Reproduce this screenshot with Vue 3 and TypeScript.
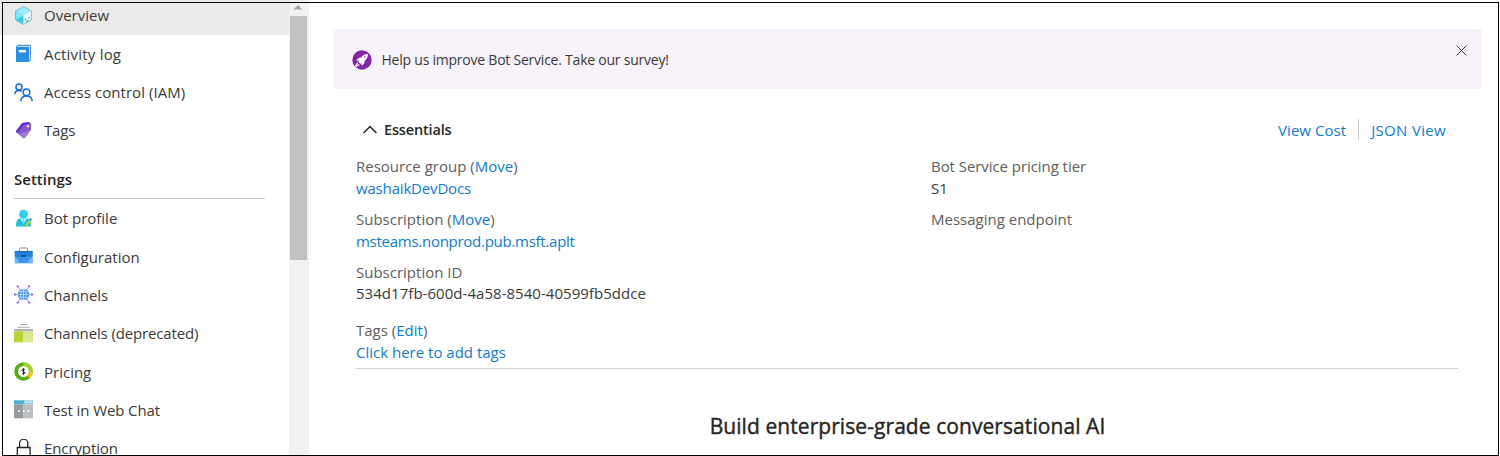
<script setup lang="ts">
interface NavItem { icon: string; label: string; active?: boolean }

const general: NavItem[] = [
  { icon: 'cube', label: 'Overview', active: true },
  { icon: 'log', label: 'Activity log' },
  { icon: 'people', label: 'Access control (IAM)' },
  { icon: 'tag', label: 'Tags' },
]
const settings: NavItem[] = [
  { icon: 'bot', label: 'Bot profile' },
  { icon: 'case', label: 'Configuration' },
  { icon: 'globe', label: 'Channels' },
  { icon: 'stack', label: 'Channels (deprecated)' },
  { icon: 'price', label: 'Pricing' },
  { icon: 'chat', label: 'Test in Web Chat' },
  { icon: 'lock', label: 'Encryption' },
]
</script>

<template>
  <div class="page">
    <nav class="sidebar">
      <template v-for="(group, gi) in [general, settings]" :key="gi">
        <h2 v-if="gi === 1" class="heading"><span class="t">Settings</span></h2>
        <div v-for="item in group" :key="item.label" class="item" :class="{ active: item.active }">
          <svg class="icon" viewBox="0 0 19 19" width="19" height="19">
            <g v-if="item.icon === 'cube'">
              <path d="M9.5 .5 17.5 5 9.5 9.6 1.6 5Z" fill="#9cebf9" />
              <path d="M1.6 5 9.5 9.6V18.5L1.6 14Z" fill="#32d0e8" />
              <path d="M1.6 5 9.5 9.6 1.6 14Z" fill="#7fe8f8" />
              <path d="M17.5 5 9.5 9.6V18.5L17.5 14Z" fill="#eaf9fd" />
              <path d="M9.5 .5 17.5 5V14L9.5 18.5 1.6 14V5Z" fill="none" stroke="#4aaed6" stroke-width=".7" />
              <path d="M11.5 12.5v1.5M15 10.7v1.5M12.3 15.7l2-1.1" stroke="#1989c9" stroke-width="1.1" />
            </g>
            <g v-else-if="item.icon === 'log'">
              <path d="M3.8 .8H16a.8.8 0 0 1 .8.8V16l-1.8 2H3.2A1.2 1.2 0 0 1 2 16.8V2.5Z" fill="#2b86d3" />
              <path d="M3.8 1.8H16V15.8l-1 .8V3H2.8Z" fill="#b9dffc" />
              <path d="M2 3h12.6v15H3.2A1.2 1.2 0 0 1 2 16.8Z" fill="#2b8fe0" />
              <rect x="4.8" y="6" width="7.2" height="2.5" rx=".4" fill="#f2faff" />
            </g>
            <g v-else-if="item.icon === 'people'" fill="none" stroke="#1268ea" stroke-width="1.5">
              <circle cx="5" cy="4" r="3" />
              <path d="M.8 11.2C1 8.5 3 7.4 5 7.4c1.2 0 2 .4 2.8 1" />
              <circle cx="12.5" cy="9.3" r="3.3" />
              <path d="M6.8 18.2c.3-3.6 2.7-5.3 5.7-5.3s5.4 1.7 5.7 5.3" />
            </g>
            <g v-else-if="item.icon === 'tag'">
              <path d="M8.3 1.9 15.3 1l1.9 2.3-.2 5.4-6.2 8.2a1.2 1.2 0 0 1-1.6.2L2.5 11.5a1.3 1.3 0 0 1-.1-1.8Z" fill="#8a57c8" />
              <path d="M8.3 1.9 15.3 1l-.8 1.8-4.3.7-6.4 7.4-1 .9a1.3 1.3 0 0 1-.4-2.1Z" fill="#6126d4" />
              <path d="M4.5 13 16.9 8.7l-6.1 8.2a1.2 1.2 0 0 1-1.6.2Z" fill="#a982dc" opacity=".75" />
              <circle cx="14" cy="5" r="1.3" fill="#fff" />
              <path d="M14 4.7c1.5-2.5 2.8-2.2 2.8-.3" stroke="#7745b8" stroke-width=".7" fill="none" />
            </g>
            <g v-else-if="item.icon === 'bot'">
              <path d="M2 17c0-5 1.5-7.5 4-7.5h7c2.5 0 4 2.5 4 6.5 0 1-.5 1.5-1.5 1.5H3Q2 17.5 2 17Z" fill="#22bcdc" />
              <path d="m6.5 9.5 3 6 3-6Z" fill="#fff" /><path d="M8.7 10h1.6l.5 3.3-1.3 2-1.3-2Z" fill="#58d7ee" />
              <circle cx="9.5" cy="5.2" r="4.5" fill="#32d0f0" />
              <path d="m10.8 18 1-3 3.4-3.7 1.7 1.5-3.5 3.9Z" fill="#b4dc2a" /><path d="m15.1 10.7 1.3-1.5 1.5 1.3-1.2 1.5Z" fill="#2878dc" />
            </g>
            <g v-else-if="item.icon === 'case'">
              <path d="M5.5 4V1.8a.8.8 0 0 1 .8-.8h6.4a.8.8 0 0 1 .8.8V4" fill="none" stroke="#858b92" stroke-width="1" />
              <rect x=".8" y="4" width="17.8" height="12.3" rx=".7" fill="#3d95ea" />
              <path d="M.8 4h17.8v1.2H.8Z" fill="#1469ba" /><path d="M.8 5h17.8v4.5H.8Z" fill="#2580d3" />
              <path d="M1 11a5 5 0 0 1 4 5.3H.8ZM18.6 10.5a5 5 0 0 0-4.3 5.8h4.3Z" fill="#75b9f4" />
              <rect x="7" y="8" width="5" height="2" rx=".5" fill="#0b4e95" />
            </g>
            <g v-else-if="item.icon === 'globe'">
              <g fill="none" stroke="#a57ae3" stroke-width=".9"><path d="M3.8 1.5 7 6M15.2 1.5 12 6M3.8 17.5 7 13M15.2 17.5 12 13M0 9.5h19" /></g>
              <g fill="#8b52df"><path d="M2.7 .5h2v1.8h-2ZM14.2 .5h2v1.8h-2ZM2.7 16.7h2v1.8h-2ZM14.2 16.7h2v1.8h-2ZM0 8.6h1.8v1.8H0ZM17.2 8.6H19v1.8h-1.8Z" /></g>
              <circle cx="9.5" cy="9.5" r="5.7" fill="#3a8ae6" />
              <g fill="none" stroke="#d9edff" stroke-width=".75"><ellipse cx="9.5" cy="9.5" rx="2.7" ry="5.6" /><path d="M9.5 4v11M4 9.5h11M4.7 6.8h9.6M4.7 12.2h9.6" /></g>
            </g>
            <g v-else-if="item.icon === 'stack'">
              <path d="M6 .5h7.500M3.300 3.200h12.500" stroke="#a4a6a9" stroke-width="1" /><path d="M0 5h19v2.500H0Z" fill="#b2b4b7" />
              <path d="M0 7.300h9.500v11H0Z" fill="#b8d432" /><path d="M9.500 7.300H19v11H9.500Z" fill="#d8e893" />
            </g>
            <g v-else-if="item.icon === 'price'">
              <circle cx="9.5" cy="9.5" r="7.4" fill="#fff" stroke="#5aaa19" stroke-width="3.8" />
              <path d="M9.5 2.1a7.4 7.4 0 0 1 7.4 7.4" fill="none" stroke="#a4cf23" stroke-width="3.8" />
              <path d="M16.9 9.5a7.4 7.4 0 0 1-2.5 5.5" fill="none" stroke="#fbc412" stroke-width="3.8" />
              <path d="M11 7.7C10.3 7 8.1 7 8.1 8.3c0 1.5 2.9.9 2.9 2.4 0 1.3-2.3 1.3-3.1.5M9.5 6.2v6.6" fill="none" stroke="#222" stroke-width="1" />
            </g>
            <g v-else-if="item.icon === 'chat'">
              <path d="M0 .3h10v4H0Z" fill="#49aed6" /><path d="M10 .3h9v4h-9Z" fill="#8bcbe5" />
              <path d="M11 1.5h2v1.3h-2ZM13.7 1.5h2v1.3h-2ZM16.3 1.5h1.5v1.3h-1.5Z" fill="#fff" />
              <path d="M0 4.3h9.5v14H0Z" fill="#979a9e" /><path d="M9.5 4.3H19v14H9.5Z" fill="#bdbec0" />
              <g fill="#fff"><circle cx="5" cy="11" r="1.1" /><circle cx="9.7" cy="11" r="1.1" /><circle cx="14.4" cy="11" r="1.1" /></g>
            </g>
            <g v-else fill="none" stroke="#252525" stroke-width="1.3">
              <path d="M3.3 8.5h12.800V19H3.300ZM5.600 8.500V4.300a4.100 4.100 0 0 1 8.200 0v4.200" />
            </g>
          </svg>
          <span class="t" :class="'nav-' + item.icon">{{ item.label }}</span>
        </div>
      </template>
    </nav>
    <div class="scrollbar">
      <svg width="18" height="14" viewBox="0 0 18 14"><path d="M4.5 8.5 9 4 13.5 8.5Z" fill="#a3a3a3" /></svg>
      <div class="thumb"></div>
    </div>
    <main class="main">
      <section class="banner">
        <svg class="rocket" width="20" height="20" viewBox="0 0 20 20">
          <circle cx="10" cy="10" r="9.7" fill="#8527a5" />
          <path d="M15.8 4c-2.7 0-4.8 1-6.4 3.3L6.6 7.9l-2.4 2.6 2.6.1-.6 1.2 2 2 1.2-.6.1 2.6 2.600-2.400.6-2.800c2.300-1.600 3.200-3.900 3.100-6.600Z" fill="#fff" />
          <path d="m5.600 12.600-2.200 3.700M7.400 14.400l-3.700 2.100" stroke="#fff" stroke-width="1.1" fill="none" />
          <circle cx="12.8" cy="7" r=".8" fill="#8527a5" />
        </svg>
        <span class="t help">Help us improve Bot Service. Take our survey!</span>
        <svg class="close" width="11" height="11" viewBox="0 0 11 11"><path d="m.7.7 9.6 9.6m0-9.6L.7 10.3" stroke="#333" stroke-width="1" /></svg>
      </section>
      <header class="bar">
        <svg class="chevron" width="14" height="9" viewBox="0 0 14 9"><path d="M.6 8 7 1.5 13.4 8" fill="none" stroke="#222" stroke-width="1.5" /></svg>
        <h3 class="t ess">Essentials</h3>
        <a class="t cost">View Cost</a><i class="sep"></i><a class="t json">JSON View</a>
      </header>
      <section class="details">
        <div>
          <dl><dt><span class="t">Resource group (<a>Move</a>)</span></dt><dd><a class="t group">washaikDevDocs</a></dd></dl>
          <dl><dt><span class="t">Subscription (<a>Move</a>)</span></dt><dd><a class="t sub">msteams.nonprod.pub.msft.aplt</a></dd></dl>
          <dl><dt><span class="t">Subscription ID</span></dt><dd><span class="t guid">534d17fb-600d-4a58-8540-40599fb5ddce</span></dd></dl>
          <dl class="tags"><dt><span class="t">Tags (<a>Edit</a>)</span></dt><dd><a class="t">Click here to add tags</a></dd></dl>
        </div>
        <div>
          <dl><dt><span class="t tier">Bot Service pricing tier</span></dt><dd><span class="t">S1</span></dd></dl>
          <dl><dt><span class="t">Messaging endpoint</span></dt></dl>
        </div>
      </section>
      <h1 class="title"><span class="t">Build enterprise-grade conversational AI</span></h1>
    </main>
    <div class="frame"></div>
  </div>
</template>

<style>
body { background: #fff; }
</style>

<style scoped>
.page { position: relative; display: flex; width: 1500px; height: 456px; overflow: hidden; background: #fff; color: #3b3a39; font: 15px/20px "Open Sans", "Noto Sans", sans-serif; }
.frame { position: absolute; inset: 2px 1px 0 2px; border: 1px solid #000; }
h1, h2, h3 { margin: 0; font-weight: 600; }
dl, dd { margin: 0; }
.t { white-space: nowrap; }
a { color: #0f7bd0; }
.sidebar { width: 289px; flex: none; margin-top: -3.8px; }
.item { display: flex; align-items: center; height: 38.33px; padding-left: 14px; }
.item.active { background: #ebeae9; }
.icon { flex: none; margin-right: 11px; }
.nav-log { letter-spacing: .2px; }
.nav-people { letter-spacing: .06px; }
.nav-tag { letter-spacing: -.2px; }
.nav-globe, .nav-chat, .nav-lock { letter-spacing: -.1px; }
.nav-stack { letter-spacing: -.14px; }
.heading { width: 251px; height: 49.5px; margin: 0 0 .1px 14px; padding-top: 19.4px; box-sizing: border-box; border-bottom: 1px solid #c8c8c8; font-size: 15px; line-height: 20px; color: #262626; }
.scrollbar { width: 20px; flex: none; background: #f1f1f1; }
.scrollbar svg { display: block; height: 16px; }
.thumb { width: 17px; height: 244px; margin-left: 1px; background: #c1c1c1; }
.main { flex: 1; min-width: 0; padding: 29px 18px 0 24px; }
.banner { display: flex; align-items: center; height: 60px; padding: 0 15px 0 19px; border-radius: 3px; background: #f8f3fb; font-size: 14px; }
.rocket { margin-top: 1px; }
.help { margin-left: 9.5px; padding-top: 2px; letter-spacing: -.23px; }
.close { margin: -18px 0 0 auto; }
.bar { display: flex; align-items: center; height: 24px; margin: 29px 36px 0 30px; }
.chevron { margin-top: -2px; }
.ess { margin: 0 auto 0 7px; font-size: 14.5px; letter-spacing: -.16px; color: #262626; }
.cost { letter-spacing: .05px; }
.json { letter-spacing: .33px; }
.sep { width: 1px; height: 21px; margin: -2px 12px 0; background: #d2d0ce; }
.details { display: grid; grid-template-columns: 575px 1fr; height: 211.6px; margin: 14.4px 24px 0 23px; border-bottom: 1px solid #d2d2d2; line-height: 21.5px; }
.group { letter-spacing: -.17px; }
.sub { letter-spacing: -.27px; }
.guid { letter-spacing: .04px; }
.tier { letter-spacing: -.06px; }
dl { height: 52.7px; }
dt { color: #605e5c; }
.tags { margin-top: 5.7px; }
.title { margin-top: 42px; text-align: center; font-size: 21px; font-weight: 400; letter-spacing: .07px; line-height: 30px; color: #262626; -webkit-text-stroke: .4px #262626; }
</style>
